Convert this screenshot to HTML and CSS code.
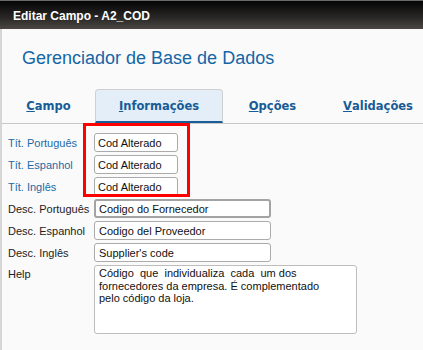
FILE: index.html
```html
<!DOCTYPE html>
<html lang="pt">
  <head>
    <meta charset="UTF-8" />
    <meta name="viewport" content="width=device-width, initial-scale=1.0" />
    <title>Editar Campo</title>
    <link rel="stylesheet" href="styles.css">
  </head>
  <body>
    <div class="window">
      <div class="titlebar">Editar Campo - A2_COD</div>
      <div class="panel">
        <h1 class="panel-title">Gerenciador de Base de Dados</h1>
        <div class="tabs">
          <div class="tab tab-campo"><u>C</u>ampo</div>
          <div class="tab tab-info tab-active"><u>I</u>nformações</div>
          <div class="tab tab-opcoes"><u>O</u>pções</div>
          <div class="tab tab-valid"><u>V</u>alidações</div>
        </div>
        <div class="form">
          <div class="highlight"></div>

          <label class="field-label field-label-blue">Tít. Português</label>
          <input class="field field-short" value="Cod Alterado" />

          <label class="field-label field-label-blue">Tít. Espanhol</label>
          <input class="field field-short" value="Cod Alterado" />

          <label class="field-label field-label-blue">Tít. Inglês</label>
          <input class="field field-short" value="Cod Alterado" />

          <label class="field-label">Desc. Português</label>
          <input class="field field-long field-focus" value="Codigo do Fornecedor" />

          <label class="field-label">Desc. Espanhol</label>
          <input class="field field-long" value="Codigo del Proveedor" />

          <label class="field-label">Desc. Inglês</label>
          <input class="field field-long" value="Supplier's code" />

          <label class="field-label field-label-top">Help</label>
          <textarea class="field-help" readonly>Código  que  individualiza  cada  um dos
fornecedores da empresa. É complementado
pelo código da loja.</textarea>
        </div>
      </div>
    </div>
  </body>
</html>
```

FILE: styles.css
```css
body {
  margin: 0;
  background-color: #fafafa;
  font-family: "Liberation Sans", Arial, sans-serif;
}
.window {
  width: 423px;
  height: 350px;
  overflow: hidden;
}
.titlebar {
  height: 29px;
  line-height: 30px;
  padding-left: 13px;
  background: linear-gradient(#050505, #2a2827 60%, #4b4642);
  border-top: 1px solid #6a6a6a;
  box-sizing: border-box;
  color: #fff;
  font-size: 12px;
  font-weight: bold;
}
.panel {
  height: 321px;
  border-left: 2px solid #d6d6d6;
  padding-top: 19px;
  box-sizing: border-box;
}
.panel-title {
  margin: 0 0 20px 20px;
  font-size: 18px;
  font-weight: normal;
  line-height: 21px;
  color: #1465a6;
}
.tabs {
  display: flex;
  height: 34px;
  border-bottom: 1px solid #c8c8c8;
}
.tab {
  display: flex;
  flex-shrink: 0;
  justify-content: center;
  align-items: center;
  box-sizing: border-box;
  border: 1px solid transparent;
  border-bottom: 2px solid transparent;
  font-family: "DejaVu Sans", Verdana, sans-serif;
  font-size: 11.5px;
  font-weight: bold;
  color: #175c96;
}
.tab-campo {
  width: 93px;
}
.tab-info {
  width: 128px;
}
.tab-opcoes {
  width: 99px;
}
.tab-valid {
  width: 112px;
}
.tab-active {
  background-color: #e3eef9;
  border-color: #cfcfcf;
  border-bottom: 2px solid #175d99;
  border-radius: 4px 4px 0 0;
}
.form {
  position: relative;
  display: grid;
  grid-template-columns: 86px auto;
  row-gap: 3px;
  align-items: center;
  justify-items: start;
  margin-top: 9px;
  padding-left: 6px;
}
.highlight {
  position: absolute;
  left: 81px;
  top: -10px;
  width: 107px;
  height: 74px;
  border: 3px solid #f00;
  box-sizing: border-box;
  pointer-events: none;
}
.field-label {
  font-size: 11px;
  color: #222;
}
.field-label-blue {
  color: #1a6aa8;
}
.field-label-top {
  align-self: start;
  padding-top: 3px;
}
.field {
  height: 19px;
  box-sizing: border-box;
  border: 1px solid #ababab;
  border-radius: 3px;
  padding: 0 3px;
  background-color: #fff;
  font-family: "Liberation Sans", Arial, sans-serif;
  font-size: 11px;
  color: #111;
  outline: none;
}
.field-short {
  width: 84px;
}
.field-long {
  width: 177px;
  padding: 0 4px;
}
.field-focus {
  border: 2px solid #a3a3a3;
  padding: 0 3px;
}
.field-help {
  width: 263px;
  height: 69px;
  box-sizing: border-box;
  border: 1px solid #bdbdbd;
  border-radius: 3px;
  padding: 1px 4px;
  margin: 0;
  resize: none;
  overflow: hidden;
  background-color: #fff;
  font-family: "Liberation Sans", Arial, sans-serif;
  font-size: 11px;
  line-height: 12.5px;
  color: #111;
  outline: none;
}
```
